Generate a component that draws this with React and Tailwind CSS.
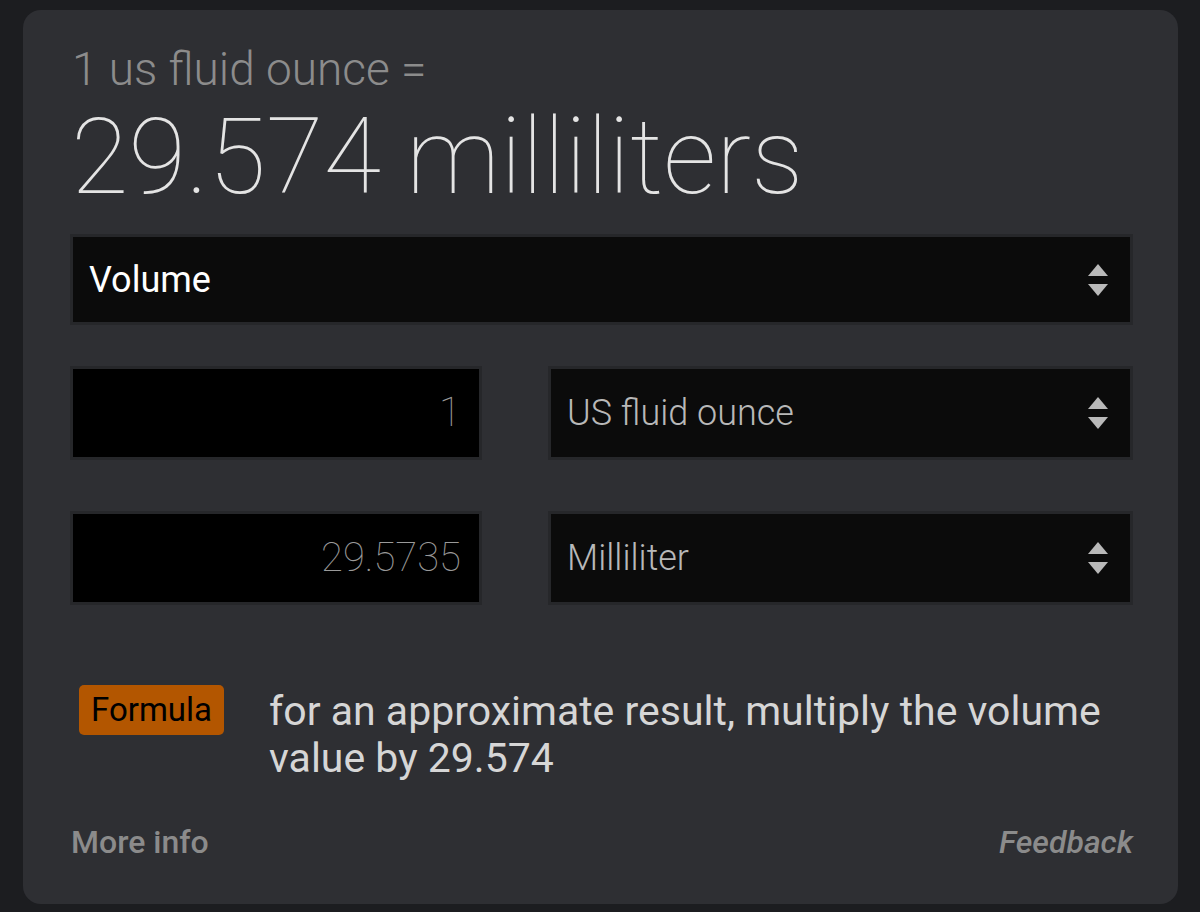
const font = { fontFamily: 'Roboto, "Noto Sans", sans-serif' }

function UpDown() {
  return (
    <svg width="24" height="36" viewBox="0 0 24 36" className="shrink-0">
      <path d="M12 2 L22 14 L2 14 Z" fill="#b9b9b9" strokeLinejoin="round" />
      <path d="M12 34 L22 22 L2 22 Z" fill="#b9b9b9" strokeLinejoin="round" />
    </svg>
  )
}

function Select({ label, light }) {
  return (
    <div className="flex h-full items-center justify-between border-[3px] border-[#26272a] bg-[#0b0b0b] pl-[16px] pr-[20px]">
      <span className={light ? 'text-[36px] font-light text-[#b8b8b8]' : 'text-[36px] font-normal text-white'}>{label}</span>
      <UpDown />
    </div>
  )
}

function NumBox({ value }) {
  return (
    <div className="flex h-full items-center justify-end border-[3px] border-[#26272a] bg-black pr-[18px]">
      <span className="text-[40px] font-thin text-[#9a9a9a]">{value}</span>
    </div>
  )
}

export default function App() {
  return (
    <div className="min-h-[912px] w-full bg-[#1c1d20] pl-[23px] pr-[22px] pt-[10px] pb-[8px]" style={font}>
      <div className="flex h-[894px] flex-col rounded-[18px] bg-[#2e2f33] pl-[47px] pr-[45px]">
        <div className="mt-[31px] pl-[2px] text-[46px] font-light leading-[56px] text-[#8c8c8c]">1 us fluid ounce =</div>
        <div className="mt-[3px] pl-[1px] text-[105px] font-thin leading-[116px] text-[#e4e4e4]">29.574 milliliters</div>

        <div className="mt-[18px] h-[91px]">
          <Select label="Volume" />
        </div>

        <div className="mt-[41px] grid h-[94px] grid-cols-[412px_1fr] gap-[66px]">
          <NumBox value="1" />
          <Select label="US fluid ounce" light />
        </div>

        <div className="mt-[51px] grid h-[94px] grid-cols-[412px_1fr] gap-[66px]">
          <NumBox value="29.5735" />
          <Select label="Milliliter" light />
        </div>

        <div className="mt-[80px] flex items-start gap-[45px] pl-[9px]">
          <div className="shrink-0 rounded-[5px] bg-[#b35600] px-[12px] text-[33px] leading-[50px] text-black">Formula</div>
          <p className="mt-[3px] max-w-[850px] text-[41px] leading-[47px] text-[#d6d6d6]">
            for an approximate result, multiply the volume value by 29.574
          </p>
        </div>

        <div className="mt-[auto] mb-[38px] flex items-center justify-between pl-[1px]">
          <span className="text-[32px] font-medium text-[#8b8b8b]">More info</span>
          <span className="text-[32px] font-medium italic text-[#8b8b8b]">Feedback</span>
        </div>
      </div>
    </div>
  )
}
